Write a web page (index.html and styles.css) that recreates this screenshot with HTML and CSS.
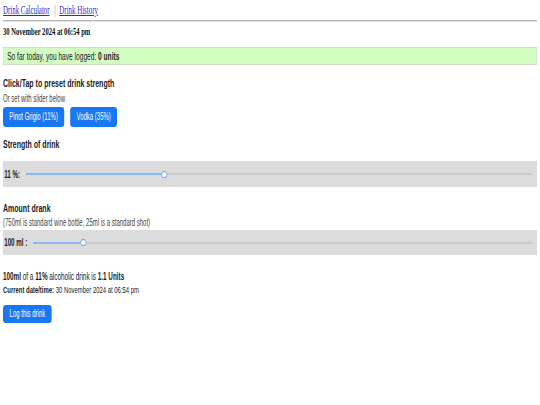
FILE: index.html
```
<!DOCTYPE html>
<html lang="en">
<head>
<meta charset="utf-8">
<title>Drink Calculator</title>
<link rel="stylesheet" href="styles.css">
</head>
<body>
<div class="viewport">
<div class="page">
  <nav class="nav">
    <a href="#">Drink Calculator</a><span class="sep">|</span><a href="#">Drink History</a>
  </nav>
  <hr class="rule">
  <div class="date">30 November 2024 at 06:54 pm</div>

  <div class="logged">So far today, you have logged: <b>0 units</b></div>

  <h2 class="heading first">Click/Tap to preset drink strength</h2>
  <p class="hint">Or set with slider below</p>
  <div class="presets">
    <button class="btn">Pinot Grigio (11%)</button>
    <button class="btn">Vodka (35%)</button>
  </div>

  <h2 class="heading strength">Strength of drink</h2>
  <div class="panel tall">
    <span class="plabel">11 %:</span>
    <div class="track"><div class="fill" style="width:27.3%"></div><div class="thumb" style="left:27.3%"></div></div>
  </div>

  <h2 class="heading amount">Amount drank</h2>
  <p class="hint note">(750ml is standard wine bottle, 25ml is a standard shot)</p>
  <div class="panel short">
    <span class="plabel">100 ml :</span>
    <div class="track"><div class="fill" style="width:10%"></div><div class="thumb" style="left:10%"></div></div>
  </div>

  <p class="result"><b>100ml</b> of a <b>11%</b> alcoholic drink is <b>1.1 Units</b></p>
  <p class="result now"><b>Current date/time:</b> 30 November 2024 at 06:54 pm</p>
  <button class="btn log">Log this drink</button>
</div>
</div>
</body>
</html>
```
FILE: styles.css
```
html, body {
  margin: 0;
  padding: 0;
  overflow: hidden;
  background: #ffffff;
}
.viewport {
  width: 540px;
  height: 405px;
  overflow: hidden;
}
.page {
  width: 900px;
  box-sizing: border-box;
  padding: 4px 5px 0 5px;
  transform: scaleX(0.6);
  transform-origin: 0 0;
  font-family: "Liberation Sans", Arial, sans-serif;
  color: #222222;
}
.nav {
  font-family: "Liberation Serif", "Times New Roman", serif;
  font-size: 11.5px;
  line-height: 13px;
  margin: 0;
}
.nav a {
  color: #2a2ad0;
  text-decoration: underline;
}
.sep {
  color: #777777;
  margin: 0 6px 0 8px;
}
.rule {
  margin: 3px 0 0 0;
  height: 0;
  border: 0;
  border-top: 1px solid #b4b4b4;
  border-bottom: 1px solid #e6e6e6;
}
.date {
  font-family: "Liberation Serif", "Times New Roman", serif;
  font-weight: bold;
  font-size: 11px;
  line-height: 13px;
  margin-top: 3px;
  color: #111111;
}
.logged {
  margin-top: 9px;
  background: #d3fcc2;
  border: 1px solid #cfdfc8;
  padding: 2px 6px;
  font-size: 11px;
  line-height: 12px;
  color: #222222;
}
.heading {
  font-size: 11.7px;
  line-height: 14px;
  font-weight: bold;
  margin: 0;
  color: #222222;
}
.heading.first { margin-top: 11px; }
.heading.strength { margin-top: 10px; }
.heading.amount { margin-top: 14px; }
.hint {
  margin: 3px 0 0 0;
  font-size: 10px;
  line-height: 12px;
  color: #444444;
}
.hint.note { margin-top: 2px; }
.presets {
  display: flex;
  gap: 10px;
  margin-top: 2px;
}
.btn {
  font-family: "Liberation Sans", Arial, sans-serif;
  font-size: 10px;
  line-height: 12px;
  padding: 4px 10.5px;
  border: 0;
  border-radius: 5px / 3px;
  background: #1877f2;
  color: #ffffff;
  margin: 0;
}
.panel {
  display: flex;
  align-items: center;
  background: #dcdcdc;
  padding: 0 7px 0 2px;
  margin-top: 10px;
}
.panel.tall { height: 26px; }
.panel.short { height: 25px; margin-top: 1px; }
.plabel {
  font-weight: bold;
  font-size: 10.3px;
  color: #222222;
}
.track {
  position: relative;
  flex: 1;
  height: 2px;
  background: #cbcbcb;
  margin-left: 10px;
  border-radius: 1px;
}
.fill {
  height: 100%;
  background: #8bb9f0;
  border-radius: 1px;
}
.thumb {
  position: absolute;
  top: 50%;
  width: 8px;
  height: 5px;
  margin: -3.5px 0 0 -5px;
  border: 1px solid #6fa3ea;
  border-radius: 50%;
  background: #ffffff;
}
.result {
  margin: 15px 0 0 0;
  font-size: 10.6px;
  line-height: 12px;
  color: #222222;
}
.result.now { margin-top: 2px; font-size: 9.9px; }
.btn.log {
  display: block;
  margin-top: 9px;
  padding: 3px 11px;
}
```
